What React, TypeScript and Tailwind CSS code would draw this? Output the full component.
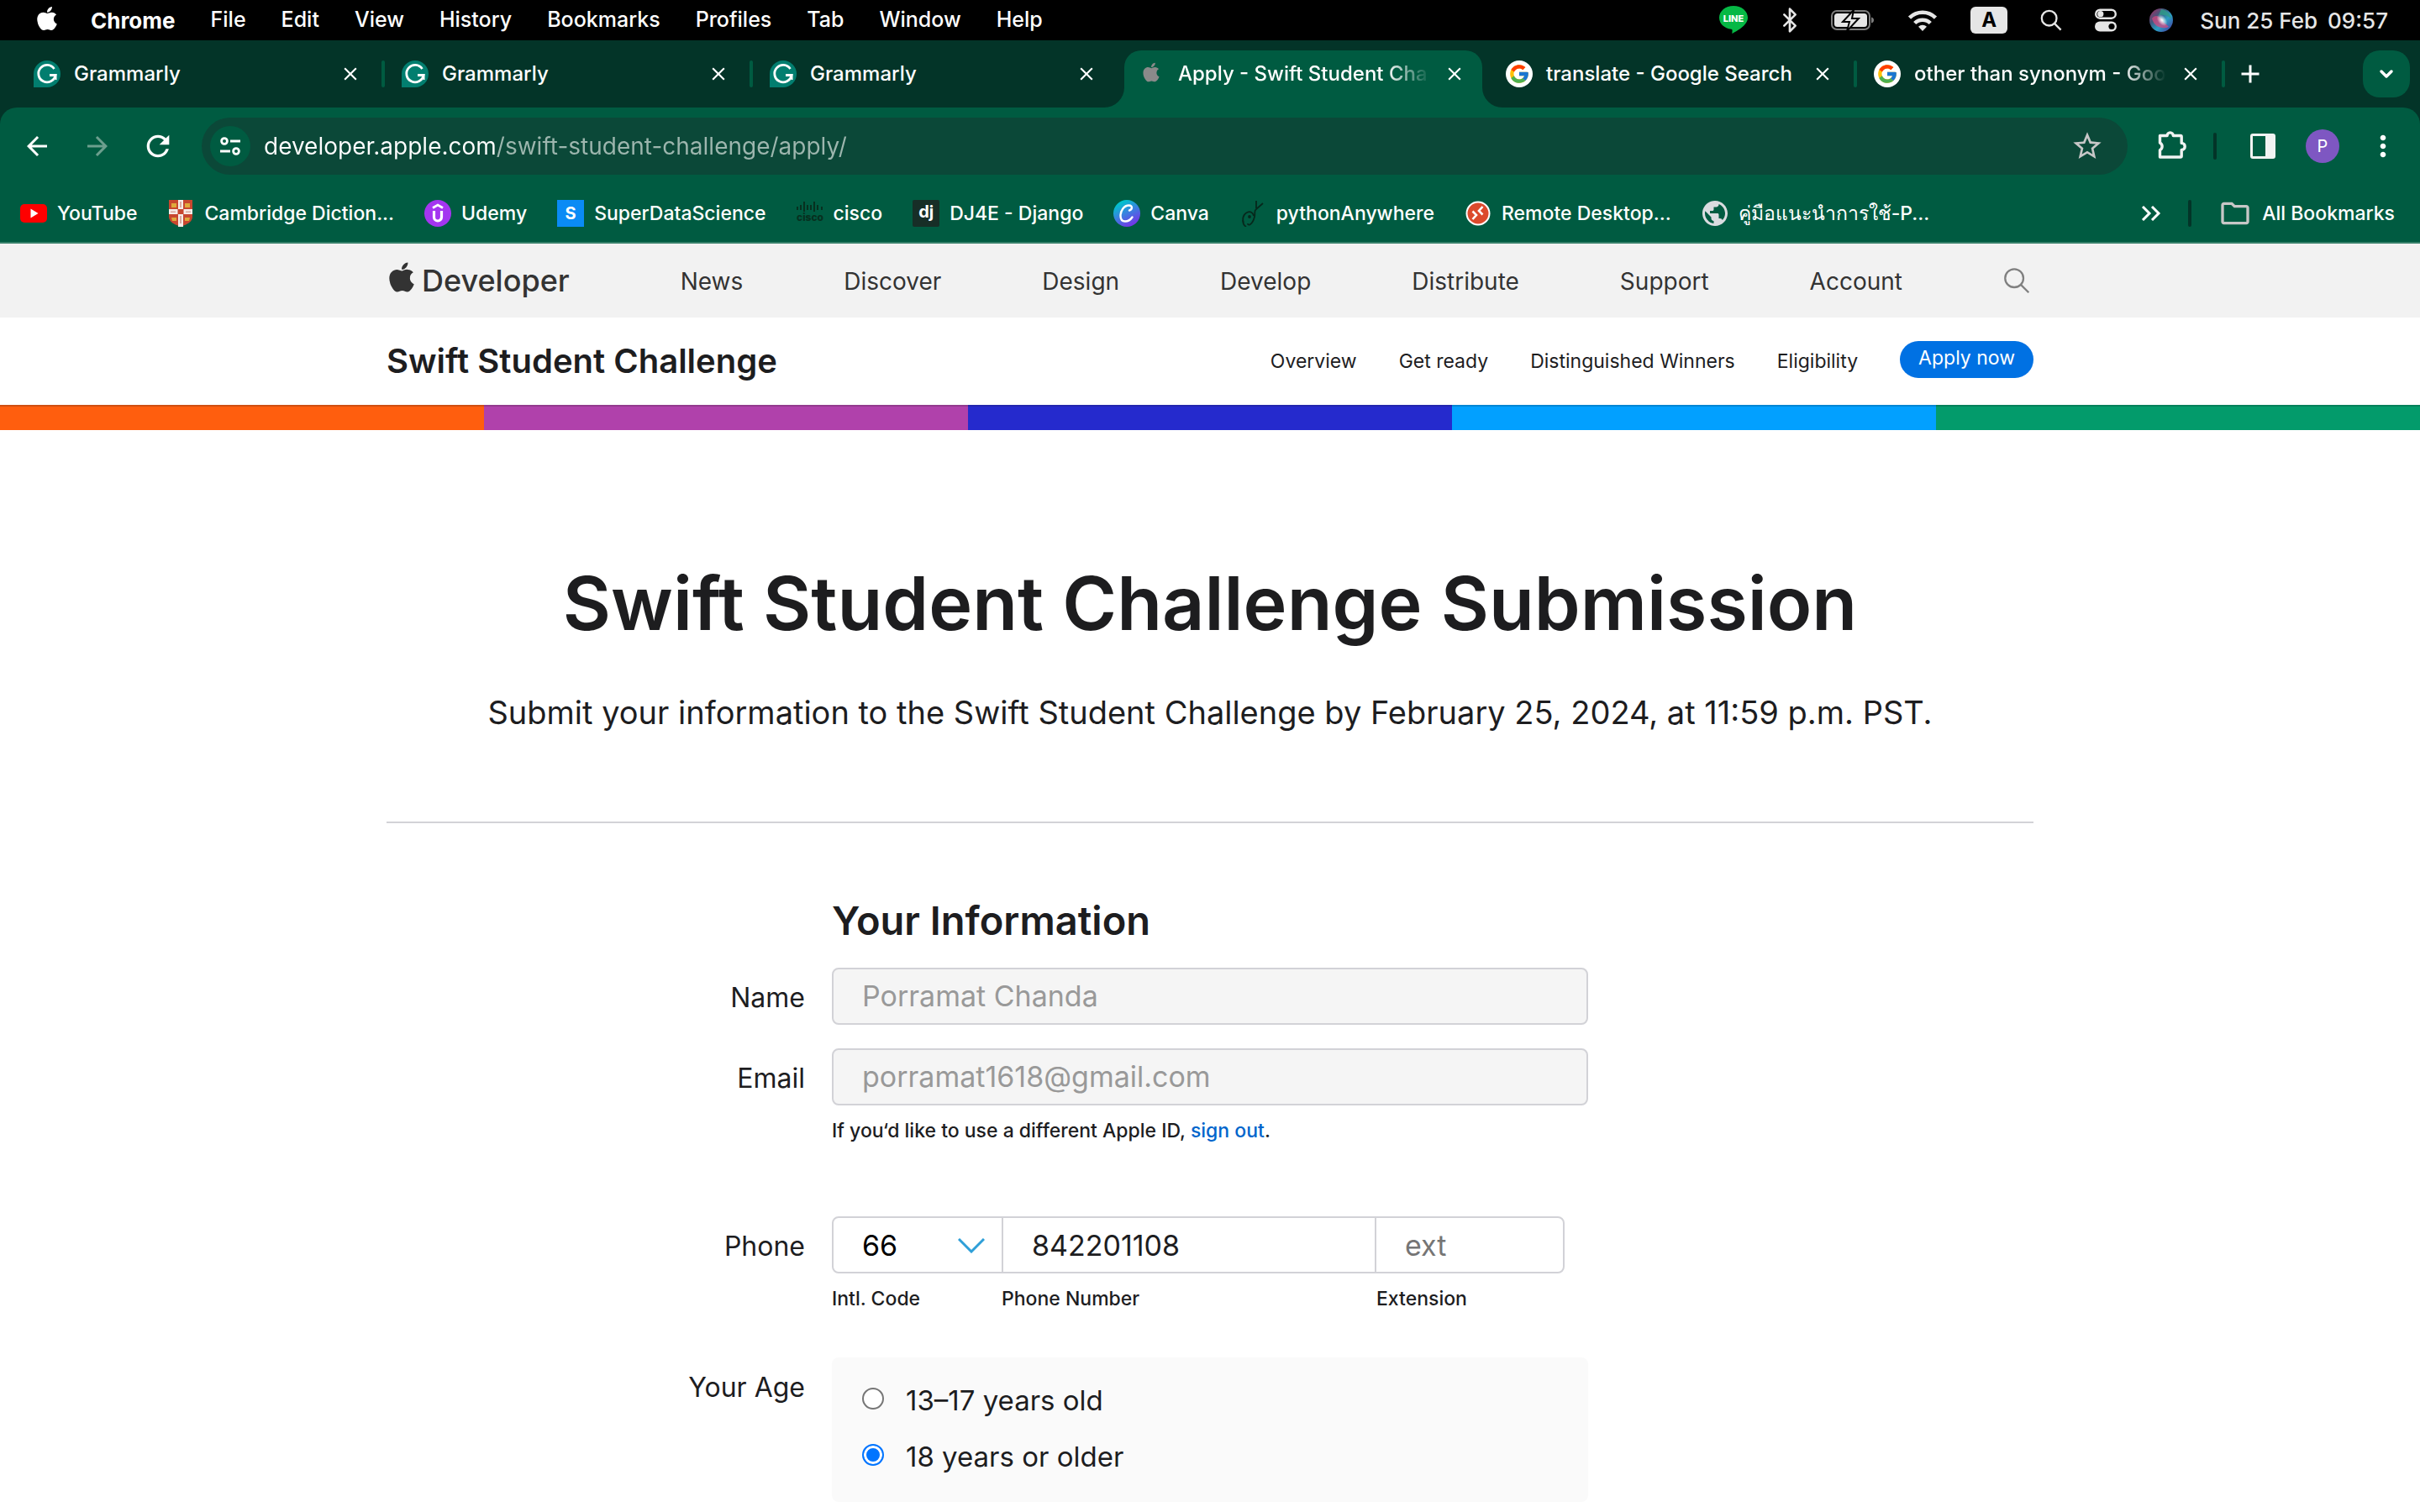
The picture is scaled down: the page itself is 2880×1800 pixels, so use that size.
import type { ReactNode } from "react";
import { Bluetooth, ChevronDown } from "lucide-react";
import { FaApple } from "react-icons/fa";
import { FcGoogle } from "react-icons/fc";
import {
  MdArrowBack,
  MdArrowForward,
  MdClose,
  MdMoreVert,
  MdOutlineFolder,
  MdPublic,
  MdRefresh,
  MdStarBorder,
  MdAdd,
} from "react-icons/md";

/* ---------- menu bar ---------- */

const menus = ["File", "Edit", "View", "History", "Bookmarks", "Profiles", "Tab", "Window", "Help"];

function LineIcon() {
  return (
    <svg viewBox="0 0 36 34" className="h-[34px] w-9" aria-label="LINE">
      <path d="M18 0C8.500 0 1 6.200 1 14c0 7 6 12.800 14.400 13.800 1.500.3 1.300 1.600.9 5.200 5-2.600 18.700-9.600 18.700-19C35 6.200 27.500 0 18 0z" fill="#06b845" />
      <text x="18" y="18.500" textAnchor="middle" fontSize="11" fontWeight="800" fill="#fff" fontFamily="Inter, sans-serif">LINE</text>
    </svg>
  );
}

function BatteryIcon() {
  return (
    <svg viewBox="0 0 52 26" className="h-[26px] w-[52px]" fill="none" aria-hidden="true">
      <rect x="1" y="2" width="45" height="22" rx="6" stroke="#7d7d7d" strokeWidth="2" />
      <path d="M48 9.500c2 .6 3 1.800 3 3.500s-1 2.900-3 3.500z" fill="#7d7d7d" />
      <rect x="4" y="5" width="39" height="16" rx="3.500" fill="#e6e6e6" />
      <path d="M27 1 14 15h8l-3 11 14-15h-8z" fill="#e6e6e6" stroke="#000" strokeWidth="2" />
    </svg>
  );
}

function WifiIcon() {
  return (
    <svg viewBox="0 0 36 26" className="h-[26px] w-9" fill="none" stroke="#e6e6e6" strokeWidth="4.500" aria-hidden="true">
      <path d="M2.500 10.200a22 22 0 0 1 31 0" />
      <path d="M8.700 16.500a13.200 13.200 0 0 1 18.600 0" />
      <path d="m18 26-5-5.200a7.200 7.200 0 0 1 10 0z" fill="#e6e6e6" stroke="none" />
    </svg>
  );
}

function Magnifier({ className }: { className: string }) {
  return (
    <svg viewBox="0 0 28 28" className={className} fill="none" stroke="currentColor" aria-hidden="true">
      <circle cx="11.500" cy="11.500" r="9.500" />
      <path d="m18.500 18.500 8 8" />
    </svg>
  );
}

function ControlCenterIcon() {
  return (
    <svg viewBox="0 0 26 28" className="h-7 w-[26px]" fill="none" aria-hidden="true">
      <rect x="1.200" y="1.700" width="23.600" height="10" rx="5" stroke="#e6e6e6" strokeWidth="2.400" />
      <circle cx="6.800" cy="6.700" r="3.600" fill="#e6e6e6" />
      <rect x="0" y="15.500" width="26" height="12" rx="6" fill="#e6e6e6" />
      <circle cx="20" cy="21.500" r="3.600" fill="#000" />
    </svg>
  );
}

function SiriIcon() {
  return (
    <svg viewBox="0 0 28 28" className="size-7" aria-hidden="true">
      <defs>
        <linearGradient id="siri" x1="0" y1="0" x2="1" y2="1">
          <stop offset="0" stopColor="#b0275c" />
          <stop offset=".35" stopColor="#3d5a80" />
          <stop offset=".6" stopColor="#2b9fc4" />
          <stop offset="1" stopColor="#4a2a9a" />
        </linearGradient>
        <radialGradient id="siriGlow">
          <stop offset="0" stopColor="#fff" />
          <stop offset="1" stopColor="#fff" stopOpacity="0" />
        </radialGradient>
      </defs>
      <circle cx="14" cy="14" r="14" fill="url(#siri)" />
      <path d="M14 1c6 1 11 5 12 11-5-4-9-5-15-4z" fill="#2e9e8a" opacity=".8" />
      <path d="M3 12c3-4 8-4 11 1 2 4 6 5 9 9-7 3-17 1-20-10z" fill="#e0447f" opacity=".7" />
      <ellipse cx="15" cy="14" rx="8" ry="5" fill="url(#siriGlow)" transform="rotate(50 15 14)" />
    </svg>
  );
}

function MenuBar() {
  return (
    <header className="flex h-12 items-center bg-black pr-[38px] pl-10 text-[25px] font-medium text-white">
      <FaApple className="mb-1 size-8" aria-label="Apple menu" />
      <nav className="ml-9 flex flex-1 items-center gap-[42px]">
        <span className="text-[26px] font-bold">Chrome</span>
        {menus.map((m) => (
          <span key={m}>{m}</span>
        ))}
      </nav>
      <div className="flex items-center gap-[39px] text-[#e6e6e6]">
        <LineIcon />
        <Bluetooth className="-mx-2 h-8 w-9" strokeWidth={2} />
        <BatteryIcon />
        <WifiIcon />
        <span className="flex h-8 w-11 items-center justify-center rounded-md bg-[#e6e6e6] text-2xl font-bold text-black">A</span>
        <Magnifier className="size-[26px] stroke-[2.500]" />
        <ControlCenterIcon />
        <SiriIcon />
      </div>
      <span className="ml-8 flex gap-3 text-[26px] text-[#e6e6e6]">
        <span>Sun 25 Feb</span>
        <span>09:57</span>
      </span>
    </header>
  );
}

/* ---------- tab strip ---------- */

function GrammarlyIcon() {
  return (
    <svg viewBox="0 0 32 32" className="size-8 shrink-0" fill="none" aria-hidden="true">
      <path d="M16 0a16 16 0 0 1 0 32H0V16A16 16 0 0 1 16 0z" fill="#027e6f" />
      <path d="M24.500 10A10.200 10.200 0 1 0 26 17.500h-7" stroke="#fff" strokeWidth="2.800" />
      <path d="M26.500 16.200V23" stroke="#fff" strokeWidth="2" />
    </svg>
  );
}

function GoogleIcon() {
  return (
    <span className="flex size-8 shrink-0 items-center justify-center rounded-full bg-white">
      <FcGoogle className="size-[26px]" />
    </span>
  );
}

function GrayApple() {
  return (
    <span className="flex size-8 shrink-0 items-center justify-center">
      <FaApple className="mb-1 size-[26px] text-[#8a8a8a]" />
    </span>
  );
}

type TabData = { title: string; icon: ReactNode; active?: boolean; divider?: boolean };

const tabs: TabData[] = [
  { title: "Grammarly", icon: <GrammarlyIcon />, divider: true },
  { title: "Grammarly", icon: <GrammarlyIcon />, divider: true },
  { title: "Grammarly", icon: <GrammarlyIcon /> },
  { title: "Apply - Swift Student Cha", icon: <GrayApple />, active: true },
  { title: "translate - Google Search", icon: <GoogleIcon />, divider: true },
  { title: "other than synonym - Goo", icon: <GoogleIcon />, divider: true },
];

function Flare({ side }: { side: "left" | "right" }) {
  return (
    <svg
      viewBox="0 0 24 24"
      className={side === "left" ? "absolute right-full bottom-0 size-6" : "absolute bottom-0 left-full size-6"}
      aria-hidden="true"
    >
      <path d={side === "left" ? "M24 0v24H0A24 24 0 0 0 24 0z" : "M0 0v24h24A24 24 0 0 1 0 0z"} fill="#005b41" />
    </svg>
  );
}

function Tab({ title, icon, active, divider }: TabData) {
  const fades = title.endsWith("Cha") || title.endsWith("Goo");
  return (
    <>
      <div
        className={
          active
            ? "relative flex h-[68px] w-[426px] items-center gap-4 rounded-t-[20px] bg-[#005b41] pr-5 pb-3 pl-4"
            : "relative flex h-[68px] w-[426px] items-center gap-4 pr-5 pb-3 pl-4"
        }
      >
        {active && <Flare side="left" />}
        {active && <Flare side="right" />}
        {icon}
        <span
          className={
            fades
              ? "min-w-0 flex-1 [mask-image:linear-gradient(90deg,#000_calc(100%-52px),transparent)] whitespace-nowrap"
              : "min-w-0 flex-1 whitespace-nowrap"
          }
        >
          {title}
        </span>
        <button type="button" aria-label="Close tab">
          <MdClose className="size-[26px]" />
        </button>
      </div>
      <span className={divider ? "mx-1 mb-3 h-8 w-1 rounded-full bg-[#005b41]" : "w-3"} />
    </>
  );
}

function TabStrip() {
  return (
    <div className="flex h-20 items-center bg-[#033428] pt-3 pr-3 pl-6 text-2xl font-medium text-white">
      {tabs.map((t, i) => (
        <Tab key={i} {...t} />
      ))}
      <button type="button" aria-label="New tab" className="mb-3 ml-2">
        <MdAdd className="size-9" />
      </button>
      <button type="button" aria-label="Search tabs" className="mb-3 ml-auto flex size-14 items-center justify-center rounded-[20px] bg-[#005b41]">
        <ChevronDown className="size-6" strokeWidth={3.5} />
      </button>
    </div>
  );
}

/* ---------- toolbar ---------- */

function TuneIcon() {
  return (
    <svg viewBox="0 0 24 24" className="size-6" fill="none" stroke="#fff" strokeWidth="2.800" aria-hidden="true">
      <circle cx="5" cy="6" r="3.400" />
      <path d="M12 6h12M0 18h12" />
      <circle cx="19" cy="18" r="3.400" />
    </svg>
  );
}

function PuzzleIcon() {
  return (
    <svg viewBox="0 0 34 34" className="size-[34px]" fill="none" stroke="#f1f3f2" strokeWidth="3.400" strokeLinejoin="round" aria-hidden="true">
      <path d="M2.500 6.500h8.600a3.600 3.600 0 0 1 7.200 0h8.600a1.300 1.300 0 0 1 1.300 1.300v7.600a4 4 0 0 1 0 8v7.300a1.300 1.300 0 0 1-1.300 1.300H2.500v-8.300a5 5 0 0 0 0-8.800z" />
    </svg>
  );
}

function SidePanelIcon() {
  return (
    <svg viewBox="0 0 30 30" className="size-[30px]" aria-hidden="true">
      <rect x="1.500" y="1.500" width="27" height="27" rx="1.500" fill="none" stroke="#f1f3f2" strokeWidth="3" />
      <path d="M18 1h11v28H18z" fill="#f1f3f2" />
    </svg>
  );
}

function Toolbar() {
  return (
    <div className="bg-[#033428]">
      <div className="flex h-[92px] items-center rounded-t-[20px] bg-[#005b41] px-6 text-white">
        <div className="flex w-[216px] items-center gap-8">
          <button type="button" aria-label="Back"><MdArrowBack className="size-10 p-0.5" /></button>
          <button type="button" aria-label="Forward" className="text-[#6c9f8e]"><MdArrowForward className="size-10 p-0.5" /></button>
          <button type="button" aria-label="Reload"><MdRefresh className="size-10" /></button>
        </div>
        <div className="flex h-[68px] flex-1 items-center rounded-full bg-[#0b4838] pr-7 pl-2.5">
          <button type="button" aria-label="Site information" className="flex size-12 items-center justify-center rounded-full bg-[#005b41]">
            <TuneIcon />
          </button>
          <input
            aria-label="Address"
            defaultValue="developer.apple.com/swift-student-challenge/apply/"
            className="ml-4 flex-1 bg-[linear-gradient(90deg,#fff_276px,#9db6ae_276px)] bg-clip-text text-[28px] text-transparent outline-none"
          />
          <button type="button" aria-label="Bookmark this page" className="text-[#c7c7c7]">
            <MdStarBorder className="size-10" />
          </button>
        </div>
        <button type="button" aria-label="Extensions" className="mb-1 ml-9"><PuzzleIcon /></button>
        <span className="ml-8 h-8 w-1 rounded-full bg-[#033428]" />
        <button type="button" aria-label="Side panel" className="ml-10"><SidePanelIcon /></button>
        <button type="button" aria-label="Profile" className="ml-9 flex size-10 items-center justify-center rounded-full bg-[#7e57c2] text-xl">P</button>
        <button type="button" aria-label="Menu" className="ml-8"><MdMoreVert className="size-10" /></button>
      </div>
    </div>
  );
}

/* ---------- bookmarks ---------- */

function YouTubeIcon() {
  return (
    <svg viewBox="0 0 32 32" className="size-8" aria-hidden="true">
      <rect x="0" y="5" width="32" height="22" rx="5" fill="#f00" />
      <path d="m12.500 10.500 9 5.500-9 5.500z" fill="#fff" />
    </svg>
  );
}

function CambridgeIcon() {
  return (
    <svg viewBox="0 0 32 32" className="size-8" aria-hidden="true">
      <path d="M2 0h28v20c0 6-6 9-14 12C8 29 2 26 2 20z" fill="#c8472f" />
      <path d="M5 4h6v5H5zm16 0h6v5h-6zM5 21h6v4H6zm16 0h6l-1 4h-5z" fill="#e0a93c" />
      <path d="M13 0h6v11h11v6H19v15l-3 0-3 0V17H2v-6h11z" fill="#f6ece8" />
      <path d="M12.500 11h7v6h-7z" fill="#c8472f" />
      <path d="M15 2h2v7h-2zM15 19h2v9h-2zM4 13.500h6v1.500H4zm18 0h6v1.500h-6z" fill="#d9a9a0" />
    </svg>
  );
}

function UdemyIcon() {
  return (
    <svg viewBox="0 0 32 32" className="size-8" fill="none" aria-hidden="true">
      <circle cx="16" cy="16" r="16" fill="#a435f0" />
      <path d="m10 9.500 6-3.500 6 3.500" stroke="#fff" strokeWidth="2.800" />
      <path d="M11.500 13v7.500a4.500 4.500 0 0 0 9 0V13" stroke="#fff" strokeWidth="3.200" />
    </svg>
  );
}

function SdsIcon() {
  return <span className="flex size-8 items-center justify-center bg-[#0a8bf5] text-xl font-bold">S</span>;
}

function CiscoIcon() {
  return (
    <svg viewBox="0 0 32 32" className="size-8" aria-hidden="true">
      <path d="M1 8v4M5 6v6M9 2v12M13 6v6M17 6v6M21 2v12M25 6v6M30 8v4" stroke="#07301f" strokeWidth="2" />
      <text x="16" y="25" textAnchor="middle" fontSize="12" fontWeight="800" fill="#07301f" fontFamily="Inter, sans-serif">cisco</text>
    </svg>
  );
}

function DjangoIcon() {
  return <span className="flex size-8 items-center justify-center rounded-xs bg-[#172e27] pb-1 text-xl font-bold">dj</span>;
}

function CanvaIcon() {
  return (
    <svg viewBox="0 0 32 32" className="size-8" fill="none" aria-hidden="true">
      <defs>
        <linearGradient id="canva" x1=".2" y1="0" x2=".75" y2="1">
          <stop offset=".1" stopColor="#00c4cc" />
          <stop offset=".5" stopColor="#3b7fe0" />
          <stop offset="1" stopColor="#7d2ae8" />
        </linearGradient>
      </defs>
      <circle cx="16" cy="16" r="16" fill="url(#canva)" />
      <path d="M19 12.500c3.500-1 4.500-6-.5-6C12.500 6.500 8.500 13 8.500 19c0 4 2 6.500 5.500 6.500s6.500-2 8.500-5" stroke="#fff" strokeWidth="2.400" strokeLinecap="round" />
    </svg>
  );
}

function PythonAnywhereIcon() {
  return (
    <svg viewBox="0 0 32 32" className="size-8" fill="none" stroke="#06281c" strokeWidth="1.800" aria-hidden="true">
      <path d="M20 1v9M28 4l-8 7c-3 2-1 5-2 9s-2 7-5 9-3-1-3-1M5 27c-2-5 0-10 4-12s7 0 8 4M4 24c0 3 1 6 4 8" />
      <circle cx="12" cy="20" r="1" fill="#06281c" />
    </svg>
  );
}

function RemoteDesktopIcon() {
  return (
    <svg viewBox="0 0 32 32" className="size-8" fill="none" aria-hidden="true">
      <circle cx="16" cy="16" r="13.500" fill="#dc4a2c" stroke="#fff" strokeWidth="2" />
      <path d="m9.500 13.500 4.500 4.500-4.500 5M21.500 8 17 13l4.500 4.500" stroke="#fff" strokeWidth="2.600" />
    </svg>
  );
}

const bookmarks: { label: string; icon: ReactNode }[] = [
  { label: "YouTube", icon: <YouTubeIcon /> },
  { label: "Cambridge Diction...", icon: <CambridgeIcon /> },
  { label: "Udemy", icon: <UdemyIcon /> },
  { label: "SuperDataScience", icon: <SdsIcon /> },
  { label: "cisco", icon: <CiscoIcon /> },
  { label: "DJ4E - Django", icon: <DjangoIcon /> },
  { label: "Canva", icon: <CanvaIcon /> },
  { label: "pythonAnywhere", icon: <PythonAnywhereIcon /> },
  { label: "Remote Desktop...", icon: <RemoteDesktopIcon /> },
  { label: "คู่มือแนะนำการใช้-P...", icon: <MdPublic className="-mx-0.5 size-9 text-[#dadce0]" /> },
];

function BookmarksBar() {
  return (
    <nav className="flex h-[70px] items-center border-b-2 border-[#37806a] bg-[#005b41] pr-[30px] pl-6 text-[23px] font-medium whitespace-nowrap text-white">
      <div className="flex flex-1 gap-9">
        {bookmarks.map((b) => (
          <a key={b.label} href="#" className="flex items-center gap-3">
            {b.icon}
            {b.label}
          </a>
        ))}
      </div>
      <button type="button" aria-label="More bookmarks">
        <svg viewBox="0 0 24 18" className="h-[18px] w-6" fill="none" stroke="#fff" strokeWidth="3">
          <path d="m2 1 8 8-8 8M13 1l8 8-8 8" />
        </svg>
      </button>
      <span className="mx-8 h-8 w-1 rounded-full bg-[#033428]" />
      <a href="#" className="flex items-center gap-3">
        <MdOutlineFolder className="size-10 text-[#c7c7c7]" />
        All Bookmarks
      </a>
    </nav>
  );
}

/* ---------- page ---------- */

const siteLinks = ["News", "Discover", "Design", "Develop", "Distribute", "Support", "Account"];
const localLinks = ["Overview", "Get ready", "Distinguished Winners", "Eligibility"];

function SiteNav() {
  return (
    <nav className="h-[88px] bg-[#f2f2f2]">
      <div className="mx-auto flex h-full max-w-[1960px] items-center justify-between pr-1 text-[28px] text-[#333]">
        <a href="#" className="mr-3 flex items-center gap-1 text-4xl font-medium">
          <FaApple className="mb-2 -ml-0.5 size-10" />
          Developer
        </a>
        {siteLinks.map((l) => (
          <a key={l} href="#" className="pt-0.5">{l}</a>
        ))}
        <button type="button" aria-label="Search" className="text-[#808080]">
          <Magnifier className="size-8 stroke-2" />
        </button>
      </div>
    </nav>
  );
}

function LocalNav() {
  return (
    <div className="mx-auto flex h-[104px] max-w-[1960px] items-center text-[23px]">
      <h2 className="flex-1 text-[40px] font-semibold">Swift Student Challenge</h2>
      <nav className="flex items-center gap-[50px]">
        {localLinks.map((l) => (
          <a key={l} href="#">{l}</a>
        ))}
        <a href="#" className="-mt-1 flex h-11 items-center rounded-full bg-[#0071e3] px-[22px] pb-1 text-white">Apply now</a>
      </nav>
    </div>
  );
}

function Stripes() {
  return (
    <div className="grid h-[30px] grid-cols-5">
      <div className="border-t-2 border-[#cf4f12] bg-[#ff5e0e]" />
      <div className="border-t-2 border-[#933a8e] bg-[#b041ab]" />
      <div className="border-t-2 border-[#2327ae] bg-[#252acd]" />
      <div className="border-t-2 border-[#0586d3] bg-[#02a0ff]" />
      <div className="border-t-2 border-[#05805a] bg-[#039b6b]" />
    </div>
  );
}

function Row({ label, htmlFor, children }: { label: string; htmlFor?: string; children: ReactNode }) {
  return (
    <div className="grid grid-cols-[498px_900px] gap-8">
      <label htmlFor={htmlFor} className="pt-3 text-right text-[32px] leading-[48px]">{label}</label>
      <div>{children}</div>
    </div>
  );
}

function InfoForm() {
  return (
    <form className="mx-auto max-w-[1960px] border-t-2 border-[#d2d2d7] pt-20">
      <h2 className="ml-[530px] text-[47px] leading-[72px] font-semibold">Your Information</h2>
      <div className="mt-5">
        <Row label="Name" htmlFor="name">
          <input id="name" disabled defaultValue="Porramat Chanda" className="h-[68px] w-full rounded-lg border-2 border-[#d2d2d7] bg-[#f5f5f5] px-[34px] pb-0.5 text-[34px] text-[#999]" />
        </Row>
      </div>
      <div className="mt-7">
        <Row label="Email" htmlFor="email">
          <input id="email" disabled defaultValue="porramat1618@gmail.com" className="h-[68px] w-full rounded-lg border-2 border-[#d2d2d7] bg-[#f5f5f5] px-[34px] pb-0.5 text-[34px] text-[#999]" />
          <p className="mt-4 text-[23px] leading-7 font-medium">
            If you‘d like to use a different Apple ID, <a href="#" className="text-[#06c]">sign out</a>.
          </p>
        </Row>
      </div>
      <div className="mt-[88px]">
        <Row label="Phone" htmlFor="phone">
          <div className="flex h-[68px] w-[872px] rounded-lg border-2 border-[#d2d2d7] text-[34px]">
            <div className="relative w-[202px] border-r-2 border-[#d2d2d7]">
              <select id="code" aria-labelledby="code-label" className="size-full appearance-none bg-transparent pl-[34px] text-black">
                <option>66</option>
              </select>
              <svg viewBox="0 0 32 18" className="pointer-events-none absolute top-6 right-5 h-[18px] w-8" fill="none" stroke="#2f9fd8" strokeWidth="3" aria-hidden="true">
                <path d="m1 1 15 15L31 1" />
              </svg>
            </div>
            <input id="phone" type="tel" defaultValue="842201108" className="w-[444px] border-r-2 border-[#d2d2d7] px-[34px]" />
            <input id="ext" placeholder="ext" className="min-w-0 flex-1 px-[34px] placeholder:text-[#757575]" />
          </div>
          <div className="mt-4 flex text-[23px] leading-7 font-medium">
            <label id="code-label" htmlFor="code" className="w-[202px]">Intl. Code</label>
            <label htmlFor="phone" className="w-[446px]">Phone Number</label>
            <label htmlFor="ext">Extension</label>
          </div>
        </Row>
      </div>
      <fieldset className="mt-14" aria-label="Your Age">
        <Row label="Your Age">
          <div className="flex h-[172px] flex-col justify-center gap-[19px] rounded-lg bg-[#fafafa] pb-1 pl-9 text-[33px]">
            {["13–17 years old", "18 years or older"].map((label, i) => (
              <label key={label} className="flex items-center gap-[26px] leading-[48px]">
                <input
                  type="radio"
                  name="age"
                  defaultChecked={i === 1}
                  className="mb-1 size-[26px] appearance-none rounded-full border-2 border-[#767676] bg-white checked:border-[#0075ff] checked:bg-[#0075ff] checked:shadow-[inset_0_0_0_3px_white]"
                />
                {label}
              </label>
            ))}
          </div>
        </Row>
      </fieldset>
    </form>
  );
}

export default function App() {
  return (
    <div className="h-screen overflow-hidden bg-white font-['Inter',sans-serif] text-[#1d1d1f]">
      <MenuBar />
      <TabStrip />
      <Toolbar />
      <BookmarksBar />
      <SiteNav />
      <LocalNav />
      <Stripes />
      <main>
        <div className="pt-[148px] pb-[102px] text-center">
          <h1 className="text-[88px] leading-[116px] font-semibold">Swift Student Challenge Submission</h1>
          <p className="mt-11 text-[38px] leading-[56px]">
            Submit your information to the Swift Student Challenge by February 25, 2024, at 11:59 p.m. PST.
          </p>
        </div>
        <InfoForm />
      </main>
    </div>
  );
}
